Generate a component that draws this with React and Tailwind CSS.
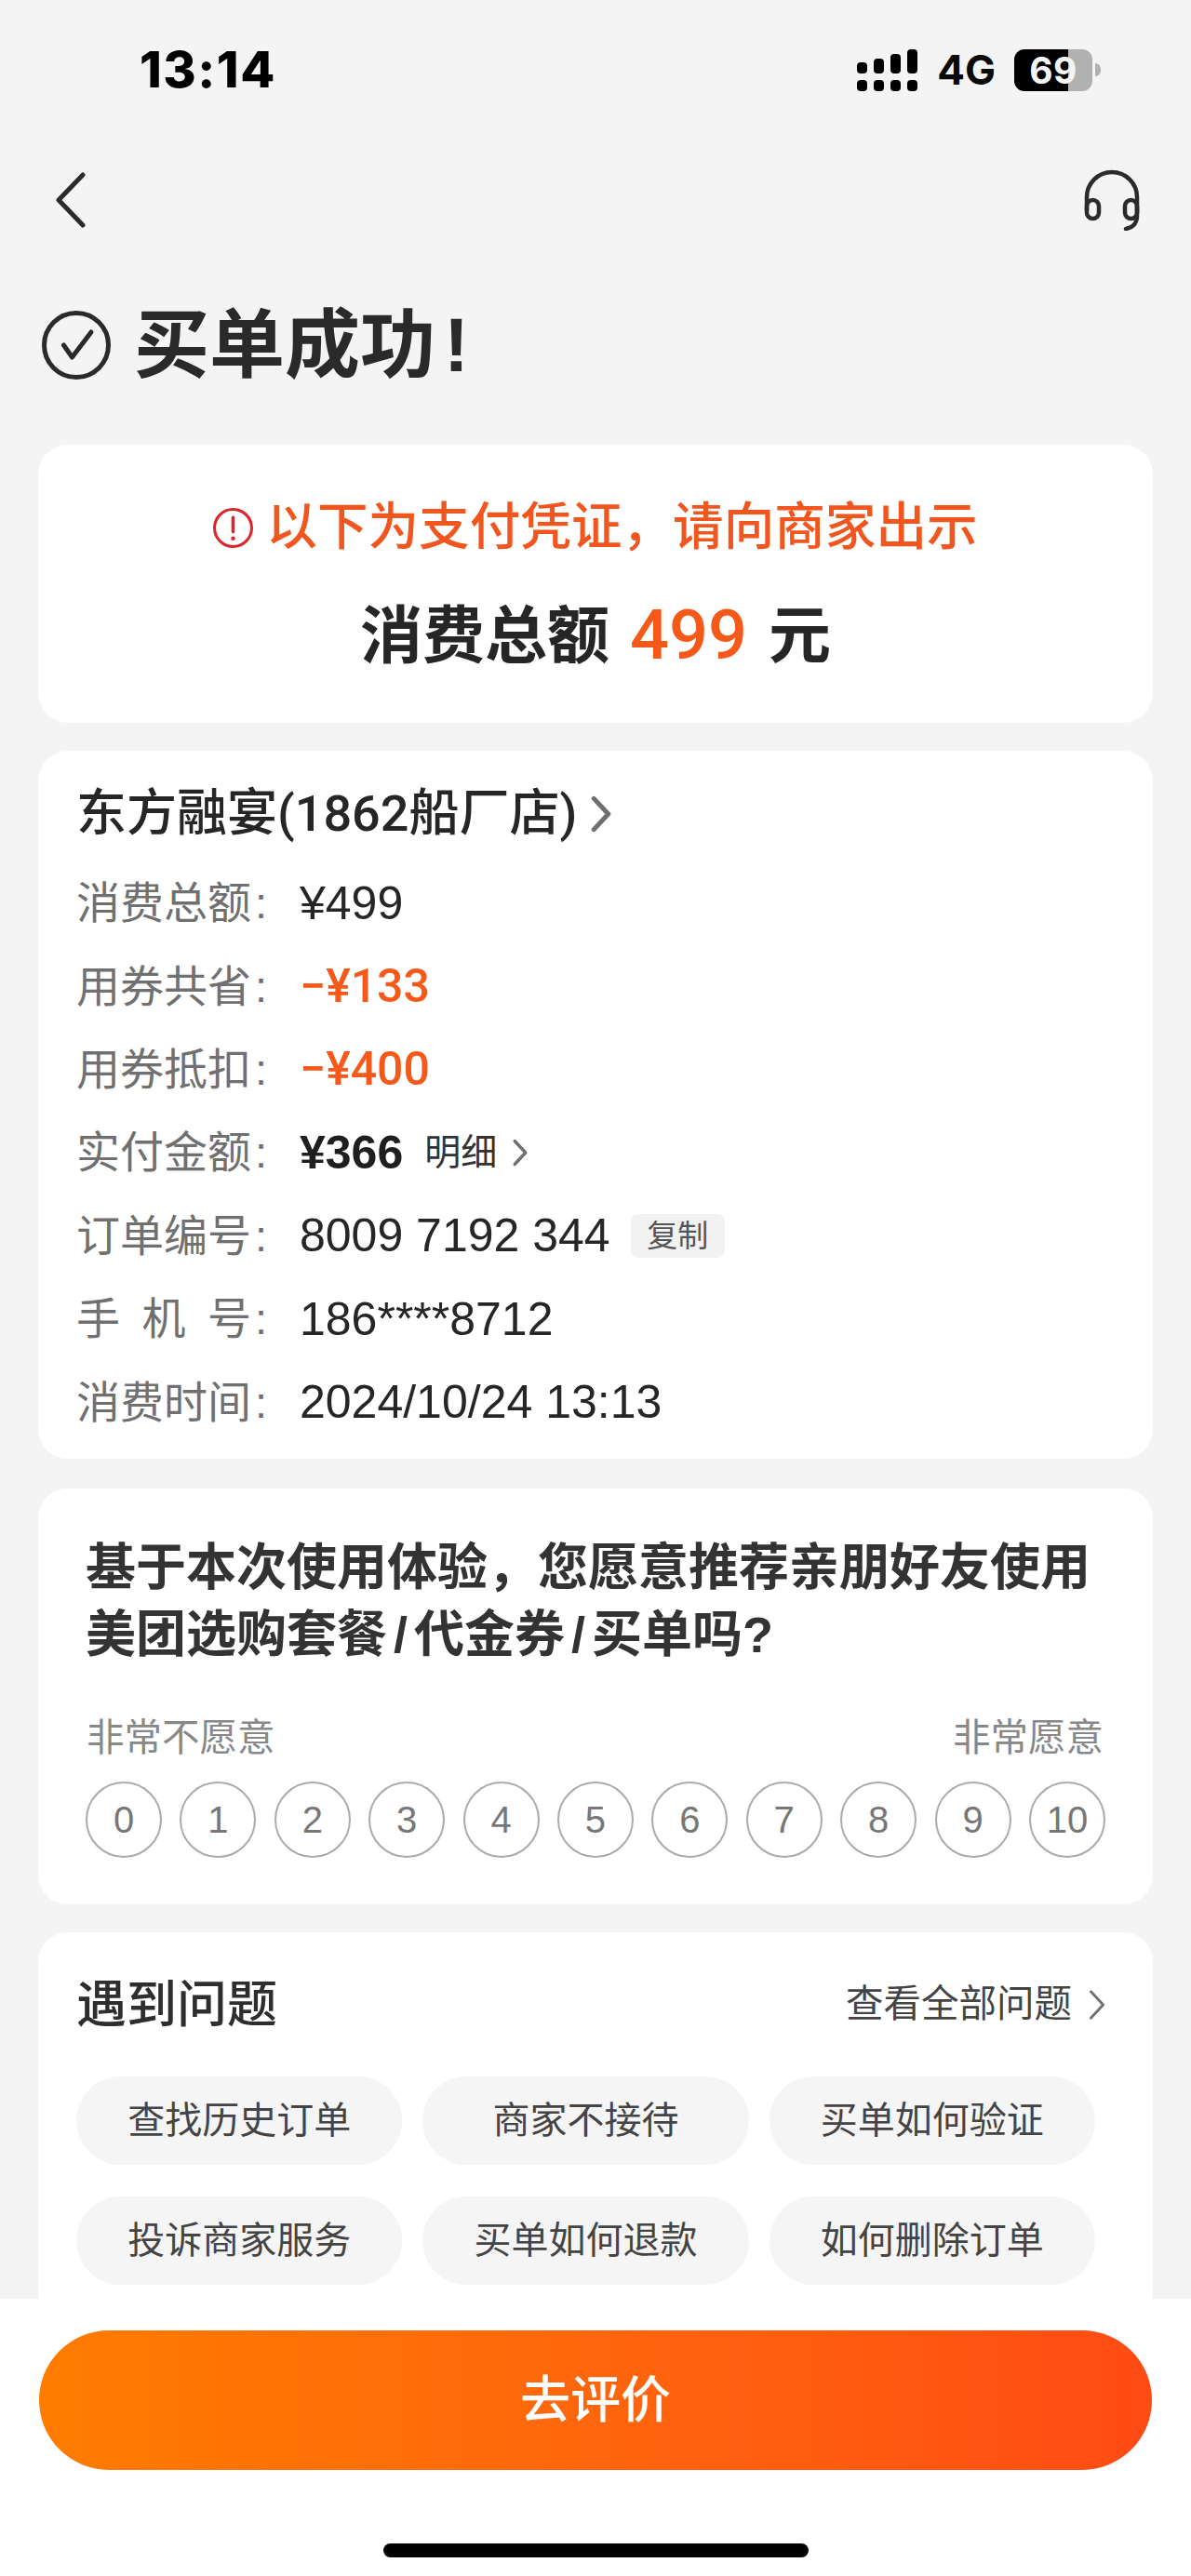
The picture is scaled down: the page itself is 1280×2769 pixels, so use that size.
import React from 'react';

const FONT = "font-['Liberation_Sans','Noto_Sans_CJK_SC',sans-serif]";

const Chevron = ({ className, color = '#6f6f6f', width = 4 }) => (
  <svg viewBox="0 0 20 36" className={className} fill="none">
    <path d="M3 3 L17 18 L3 33" stroke={color} strokeWidth={width} strokeLinecap="round" strokeLinejoin="round" />
  </svg>
);

// signal bars: two rows of dots, the top row grows to the right
const SignalIcon = () => (
  <svg viewBox="0 0 65 45" className="w-[65px] h-[45px]" fill="#000">
    <rect x="0" y="14" width="11" height="12" rx="4" />
    <rect x="18" y="10" width="11" height="16" rx="4" />
    <rect x="36" y="5" width="11" height="21" rx="4" />
    <rect x="54" y="0" width="11" height="26" rx="4" />
    <rect x="0" y="33" width="11" height="12" rx="4" />
    <rect x="18" y="33" width="11" height="12" rx="4" />
    <rect x="36" y="33" width="11" height="12" rx="4" />
    <rect x="54" y="33" width="11" height="12" rx="4" />
  </svg>
);

const Battery = () => (
  <div className="flex items-center">
    <div className="relative w-[84px] h-[45px] rounded-[11px] overflow-hidden flex">
      <div className="w-[58px] h-full bg-black" />
      <div className="flex-1 h-full bg-[#b1b1b1]" />
      <span className="absolute inset-0 flex items-center justify-center font-['Inter',sans-serif] font-bold text-[39px] leading-none tracking-[0.5px] text-[#f4f4f4]">
        69
      </span>
    </div>
    <div className="ml-[3px] w-[6px] h-[14px] rounded-r-full bg-[#b1b1b1]" />
  </div>
);

const HeadsetIcon = () => (
  <svg viewBox="0 0 60 66" className="w-[60px] h-[66px]" fill="none" stroke="#2b2b2b" strokeWidth="4.5" strokeLinecap="round">
    <path d="M3 44 V30 a27 27 0 0 1 54 0 V44" />
    <rect x="3" y="33" width="13" height="20" rx="6.5" />
    <rect x="44" y="33" width="13" height="20" rx="6.5" />
    <path d="M57 44 V50 C57 58 52 63 45 64" />
  </svg>
);

const rows = [
  { label: '消费总额', value: '¥499' },
  { label: '用券共省', value: '−¥133', tone: 'orange' },
  { label: '用券抵扣', value: '−¥400', tone: 'orange' },
  { label: '实付金额', value: '¥366', tone: 'bold', detail: true },
  { label: '订单编号', value: '8009 7192 344', copy: true },
  { label: ['手', '机', '号'], value: '186****8712' },
  { label: '消费时间', value: '2024/10/24 13:13' },
];

const chips = ['查找历史订单', '商家不接待', '买单如何验证', '投诉商家服务', '买单如何退款', '如何删除订单'];

const scores = [0, 1, 2, 3, 4, 5, 6, 7, 8, 9, 10];

const App = () => {
  return (
    <div className={`${FONT} w-[1280px] h-[2769px] bg-[#f4f4f4] flex flex-col overflow-hidden`}>
      <div className="flex-1 min-h-0 overflow-hidden">
        {/* Status bar */}
        <div className="h-[150px] flex items-center justify-between pl-[150px] pr-[97px]">
          <span className="font-['Inter',sans-serif] font-extrabold text-[54px] leading-none text-black tracking-[1.5px]">13:14</span>
          <div className="flex items-center">
            <SignalIcon />
            <span className="ml-[21px] font-['Inter',sans-serif] font-bold text-[44px] leading-none text-[#0a0a0a]">4G</span>
            <div className="ml-[20px]">
              <Battery />
            </div>
          </div>
        </div>

        {/* Nav */}
        <div className="h-[130px] flex items-center justify-between pl-[60px] pr-[55px]">
          <svg viewBox="0 0 32 60" className="w-[32px] h-[60px]" fill="none">
            <path d="M29 3 L3 30 L29 57" stroke="#2b2b2b" strokeWidth="5" strokeLinecap="round" strokeLinejoin="round" />
          </svg>
          <HeadsetIcon />
        </div>

        {/* Title */}
        <div className="mt-[41px] h-[100px] flex items-center pl-[45px]">
          <svg viewBox="0 0 74 74" className="w-[74px] h-[74px]" fill="none">
            <circle cx="37" cy="37" r="34.5" stroke="#2a2a2a" strokeWidth="5" />
            <path d="M23.5 37 L32.5 50 L53 23" stroke="#2a2a2a" strokeWidth="5" strokeLinecap="round" strokeLinejoin="round" />
          </svg>
          <h1 className="ml-[25px] text-[81px] leading-none font-bold text-[#2a2a2a]">
            买单成功<span className="ml-[9px]">!</span>
          </h1>
        </div>

        <div className="mt-[57px] px-[41px] flex flex-col">
          {/* Payment proof */}
          <div className="bg-white rounded-[32px] pt-[53px] pb-[54px] flex flex-col items-center">
            <div className="h-[72px] flex items-center">
              <svg viewBox="0 0 42 42" className="w-[43px] h-[43px]" fill="none">
                <circle cx="21" cy="21" r="19.5" stroke="#d9272e" strokeWidth="3" />
                <path d="M21 10 V25" stroke="#d9272e" strokeWidth="3.5" strokeLinecap="round" />
                <circle cx="21" cy="32" r="2.2" fill="#d9272e" />
              </svg>
              <span className="ml-[14px] text-[54.6px] leading-none font-medium text-[#f0561d]">以下为支付凭证，请向商家出示</span>
            </div>
            <div className="mt-[40px] h-[80px] flex items-center text-[67px] leading-none font-bold text-[#262626]">
              <span>消费总额</span>
              <span className="ml-[22px] font-['Roboto',sans-serif] font-medium text-[#f4591a] text-[74px]">499</span>
              <span className="ml-[23px]">元</span>
            </div>
          </div>

          {/* Order info */}
          <div className="mt-[30px] bg-white rounded-[32px] pt-[33px] pb-[16px] px-[41px]">
            <div className="h-[70px] flex items-center">
              <span className="font-['Roboto','Noto_Sans_CJK_SC',sans-serif] text-[54px] leading-none font-medium text-[#262626]">东方融宴(1862船厂店)</span>
              <Chevron className="ml-[14px] w-[24px] h-[40px]" width={4.5} />
            </div>
            <div className="mt-[16px]">
              {rows.map((row, i) => (
                <div key={i} className="h-[89.4px] flex items-center">
                  <div className="w-[240px] shrink-0 flex items-center whitespace-nowrap text-[47px] leading-none text-[#707070]">
                    {Array.isArray(row.label) ? (
                      <span className="w-[188px] flex justify-between">
                        {row.label.map((c) => (
                          <span key={c}>{c}</span>
                        ))}
                      </span>
                    ) : (
                      <span className="w-[188px]">{row.label}</span>
                    )}
                    <span className="ml-[4px]">:</span>
                  </div>
                  <span
                    className={`text-[50px] leading-none ${
                      row.tone === 'orange'
                        ? "font-['Roboto',sans-serif] text-[#f4591a] font-medium"
                        : row.tone === 'bold'
                          ? 'text-[#1f1f1f] font-bold'
                          : 'text-[#262626]'
                    }`}
                  >
                    {row.value}
                  </span>
                  {row.detail && (
                    <>
                      <span className="ml-[23px] text-[39px] leading-none text-[#333333]">明细</span>
                      <Chevron className="ml-[16px] w-[18px] h-[30px]" width={4} />
                    </>
                  )}
                  {row.copy && (
                    <span className="ml-[22px] w-[101px] h-[47px] rounded-[8px] bg-[#f2f2f2] flex items-center justify-center text-[33px] leading-none text-[#555555]">
                      复制
                    </span>
                  )}
                </div>
              ))}
            </div>
          </div>

          {/* Survey */}
          <div className="mt-[32px] bg-white rounded-[32px] pt-[49px] pb-[50px] pl-[51px] pr-[51px]">
            <p className="text-[54px] leading-[72px] font-bold text-[#333333]">
              基于本次使用体验，您愿意推荐亲朋好友使用
              <br />
              美团选购套餐<span className="mx-[7px]">/</span>代金券<span className="mx-[7px]">/</span>买单吗?
            </p>
            <div className="mt-[51px] flex justify-between text-[40.5px] leading-[48px] text-[#888888] pl-[1px] pr-[2px]">
              <span>非常不愿意</span>
              <span>非常愿意</span>
            </div>
            <div className="mt-[23px] flex justify-between">
              {scores.map((n) => (
                <div
                  key={n}
                  className="w-[82px] h-[82px] rounded-full border-2 border-[#ababab] flex items-center justify-center text-[40px] leading-none text-[#777777]"
                >
                  {n}
                </div>
              ))}
            </div>
          </div>

          {/* Help */}
          <div className="mt-[30px] bg-white rounded-[32px] pt-[43px] pl-[41px] pr-[50px] pb-[40px]">
            <div className="h-[70px] flex items-center justify-between">
              <span className="text-[54px] leading-none font-medium text-[#2e2e2e]">遇到问题</span>
              <div className="flex items-center">
                <span className="text-[40.5px] leading-none text-[#444444]">查看全部问题</span>
                <Chevron className="ml-[17px] w-[20px] h-[34px]" width={3} />
              </div>
            </div>
            <div className="mt-[42px] grid grid-cols-3 gap-x-[22px] gap-y-[34px] w-[1095px]">
              {chips.map((chip) => (
                <div key={chip} className="h-[95px] rounded-full bg-[#f5f5f5] flex items-center justify-center text-[40px] leading-none text-[#444444]">
                  {chip}
                </div>
              ))}
            </div>
          </div>
        </div>
      </div>

      {/* Bottom bar */}
      <div className="h-[298px] shrink-0 bg-white px-[42px] pt-[34px] flex flex-col">
        <div className="h-[150px] rounded-full bg-gradient-to-r from-[#ff7c00] to-[#ff4b14] flex items-center justify-center text-[54px] leading-none font-medium text-white">
          去评价
        </div>
        <div className="mt-[79px] mx-auto w-[457px] h-[15px] rounded-full bg-black" />
      </div>
    </div>
  );
};

export default App;
